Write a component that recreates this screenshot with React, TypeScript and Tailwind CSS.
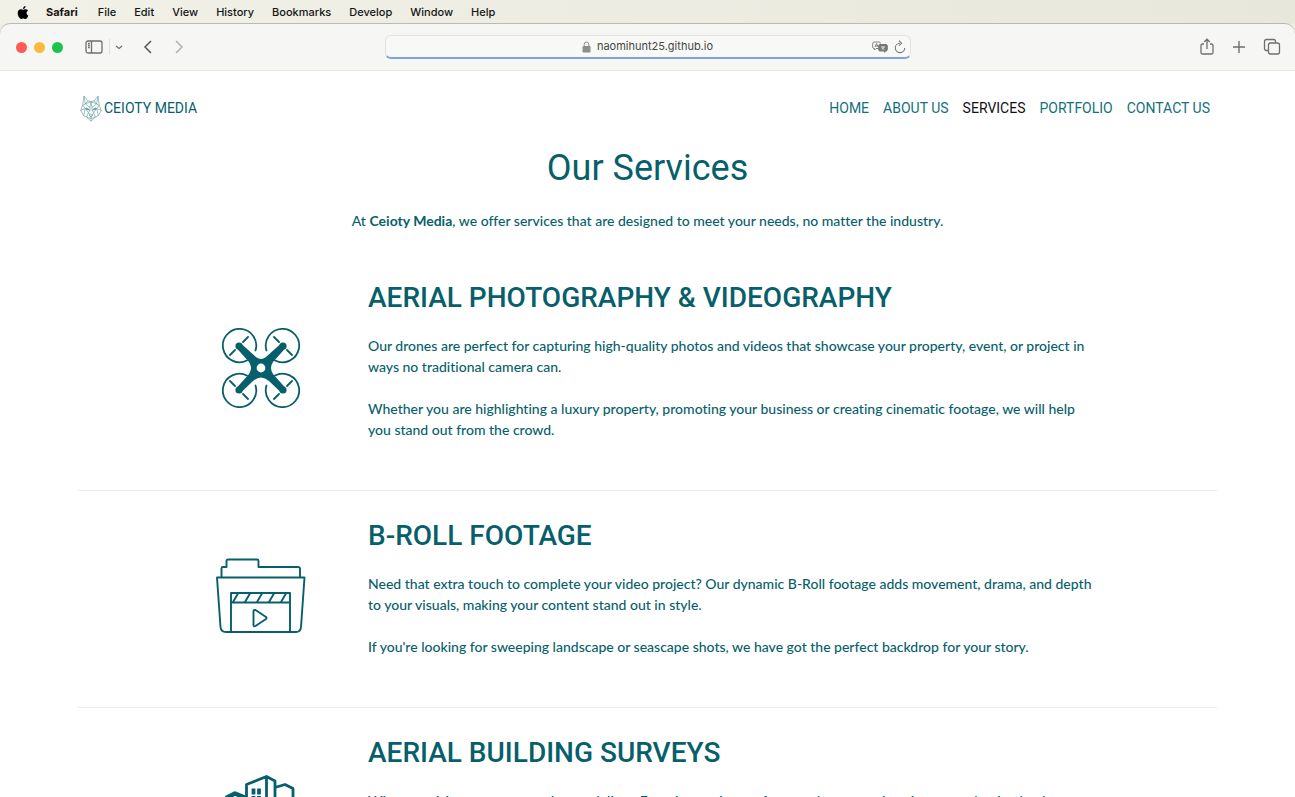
import React from "react";

const menuItems = ["File", "Edit", "View", "History", "Bookmarks", "Develop", "Window", "Help"];
const navItems = ["HOME", "ABOUT US", "SERVICES", "PORTFOLIO", "CONTACT US"];

function AppleIcon() {
  return (
    <svg viewBox="0 0 24 24" className="h-[13px] w-[14px]" fill="#000" aria-hidden="true">
      <path d="M12.15 6.9c-.95 0-2.41-1.08-3.96-1.04-2.04.03-3.91 1.18-4.96 3.01-2.12 3.68-.55 9.1 1.52 12.1 1.01 1.45 2.21 3.09 3.79 3.04 1.52-.07 2.09-.99 3.94-.99 1.83 0 2.35.99 3.96.95 1.64-.03 2.68-1.48 3.68-2.95 1.16-1.69 1.64-3.33 1.66-3.41-.04-.01-3.18-1.22-3.22-4.86-.03-3.04 2.48-4.49 2.6-4.56-1.43-2.09-3.62-2.32-4.39-2.38-2-.16-3.68 1.09-4.61 1.09zM15.53 3.83c.84-1.01 1.4-2.43 1.25-3.83-1.21.05-2.66.8-3.53 1.82-.78.9-1.45 2.34-1.27 3.71 1.34.1 2.71-.69 3.56-1.7" />
    </svg>
  );
}

function WolfIcon() {
  return (
    <svg viewBox="0 0 66 80" className="h-[27px] w-[22px]" fill="none" stroke="#5b979d" strokeWidth="1.8" strokeLinejoin="round" aria-hidden="true">
      <path d="M12 3 24 17 33 20 42 17 54 3 58 31 64 46 55 61 46 66 33 78 20 66 11 61 2 46 8 31Z" />
      <path d="M12 3 16 26 24 17M54 3 50 26 42 17M8 31 16 26 30 37 33 20 36 37 50 26 58 31M2 46 16 40 8 31M64 46 50 40 58 31M11 61 16 40 30 46M55 61 50 40 36 46M20 66 25 52 16 40M46 66 41 52 50 40M25 52 30 46 30 37M41 52 36 46 36 37M25 52 33 66 41 52M28 60 33 56 38 60 33 66ZM33 66V78M20 66 33 70 46 66M16 26 33 20 50 26" />
      <path d="M18 38 28 43 20 43ZM48 38 38 43 46 43Z" fill="#3d8289" />
    </svg>
  );
}

function DroneIcon() {
  return (
    <svg viewBox="0 0 80 80" className="h-20 w-20" fill="none" stroke="#075f6b" aria-hidden="true">
      <g strokeWidth="1.8" strokeLinecap="round">
        <path d="M26 32.500A16.700 16.700 0 1 1 34.500 22.500" />
        <path d="M54 32.500A16.700 16.700 0 1 0 45.500 22.500" />
        <path d="M26 47.500A16.700 16.700 0 1 0 34.500 57.500" />
        <path d="M54 47.500A16.700 16.700 0 1 1 45.500 57.500" />
        <path d="M22 14 27 9M14 22 9 27M58 14 53 9M66 22 71 27M14 58 9 53M22 66 27 71M66 58 71 53M58 66 53 71" />
      </g>
      <g fill="#075f6b" stroke="none">
        <circle cx="18" cy="18" r="3.600" /><circle cx="62" cy="18" r="3.600" />
        <circle cx="18" cy="62" r="3.600" /><circle cx="62" cy="62" r="3.600" />
        <path d="M20 15.500 35 29Q40 33 45 29L60 15.500 64.500 20 52 34Q48 40 52 46L64.500 60 60 64.500 48 53Q40 46 32 53L20 64.500 15.500 60 28 46Q32 40 28 34L15.500 20Z" />
      </g>
      <circle cx="40" cy="40" r="4.400" fill="#fff" stroke="none" />
    </svg>
  );
}

function FolderIcon() {
  return (
    <svg viewBox="0 0 90 76" className="h-[76px] w-[90px]" fill="none" stroke="#075f6b" strokeWidth="1.9" strokeLinejoin="round" aria-hidden="true">
      <path d="M5.500 19V10.500Q5.500 9 7 9H10.500V3Q10.500 1.500 12 1.500H41Q42.500 1.500 42.500 3V9H82Q84 9 84 11V19" />
      <path d="M1 19.500H88.500L85 69Q84.500 74 80 74H10Q5 74 4.500 69Z" />
      <path d="M15 74V35H74V74M15 44.500H74M17 44 22 35.500M29 44 34 35.500M41 44 46 35.500M53 44 58 35.500M65 44 70 35.500" />
      <path d="M37.500 53.500V67Q37.500 69 39.500 68L50 61Q51 60 50 59L39.500 52Q37.500 51.500 37.500 53.500Z" />
    </svg>
  );
}

function BuildingIcon() {
  return (
    <svg viewBox="0 2 76 76" className="h-[76px] w-[76px]" fill="none" stroke="#075f6b" strokeWidth="2.8" strokeLinejoin="round" aria-hidden="true">
      <path d="M23.500 74V11.500L43.500 3.500V74M43.500 3.500 52 8V74M52 14.500 62 11.500 70 15.500V74M5 74V26M5 74H72" />
      <path d="M3 25 12 20.500 23 25" strokeWidth="4.5" />
      <path d="M30.500 15.500V21.500M36 15.500V21.500M30.500 23V30M36 23V30M30.500 36V44M36 36V44" strokeWidth="3.8" />
    </svg>
  );
}

function Chrome() {
  return (
    <header className="grid h-[47px] shrink-0 grid-cols-[1fr_526px_1fr] items-center rounded-t-[10px] border-b border-[#e6e7e5] bg-[#f6f7f5] px-4 text-[#6f706e] shadow-[0_-1px_0_#b9bab2]">
      <div className="flex items-center">
        <div className="flex gap-[7px]">
          <button aria-label="Close" className="h-[11px] w-[11px] rounded-full bg-[#fc5b57]" />
          <button aria-label="Minimise" className="h-[11px] w-[11px] rounded-full bg-[#fdb93f]" />
          <button aria-label="Zoom" className="h-[11px] w-[11px] rounded-full bg-[#1fc24b]" />
        </div>
        <button aria-label="Sidebar" className="ml-[22px]">
          <svg viewBox="0 0 18 14" className="h-[14px] w-[18px]" fill="none" stroke="currentColor" strokeWidth="1.3"><rect x="1" y="1" width="16" height="12" rx="2" /><path d="M6.500 1V13M3 3.500H4.800M3 5.500H4.800M3 7.500H4.800" /></svg>
        </button>
        <div className="ml-1.5 h-4 w-px bg-[#e0e1df]" />
        <button aria-label="Tab groups" className="ml-[5px]">
          <svg viewBox="0 0 8 8" className="h-2 w-2" fill="none" stroke="currentColor" strokeWidth="1.3"><path d="M1 3 4 5.500 7 3" /></svg>
        </button>
        <button aria-label="Back" className="ml-5">
          <svg viewBox="0 0 10 14" className="h-[14px] w-[10px]" fill="none" stroke="#555" strokeWidth="1.5"><path d="M8 1 2 7 8 13" /></svg>
        </button>
        <button aria-label="Forward" className="ml-[21px]">
          <svg viewBox="0 0 10 14" className="h-[14px] w-[10px]" fill="none" stroke="#b1b2b0" strokeWidth="1.5"><path d="M2 1 8 7 2 13" /></svg>
        </button>
      </div>
      <div className="flex h-6 items-center rounded-md border border-b-2 border-[#e2e3e1] border-b-[#82a3d8] bg-[#f8f9f7] px-1">
        <div className="w-8" />
        <button className="flex flex-1 items-center justify-center gap-1.5 text-[11px] text-[#454644]">
          <svg viewBox="0 0 9 12" className="h-3 w-[9px]" fill="#8e8f8d"><rect x="0.500" y="5" width="8" height="6.500" rx="1" /><path d="M2.200 5V3.300a2.300 2.300 0 0 1 4.600 0V5" fill="none" stroke="#8e8f8d" /></svg>
          naomihunt25.github.io
        </button>
        <div className="flex w-8 items-center justify-end gap-1.5">
          <button aria-label="Translate">
            <svg viewBox="0 0 16 12" className="h-3 w-4" fill="none" stroke="#777876"><path d="M7 7.500H4L2.500 9V7.500H2Q.700 7.500.700 6V2.500Q.700 1 2 1H7Q8.500 1 8.500 2.500M3 6 4.600 2.500 6 6M3.500 5H5.500" strokeWidth=".9" /><path d="M8 3.500H14Q15.300 3.500 15.300 5V8.500Q15.300 10 14 10H13V11.300L11.500 10H8Q6.700 10 6.700 8.500V5Q6.700 3.500 8 3.500Z" fill="#777876" /><path d="M9 6H13M11 5V6M9.500 8.700 12.500 6M9.700 6.500 12.500 8.700" stroke="#f8f9f7" strokeWidth=".7" /></svg>
          </button>
          <button aria-label="Reload">
            <svg viewBox="0 0 12 14" className="h-[14px] w-3" fill="none" stroke="#777876" strokeWidth="1.1"><path d="M6 3.200A4.700 4.700 0 1 0 10.700 8M5 .7 7.600 3.300 5 5.700" /></svg>
          </button>
        </div>
      </div>
      <div className="-mr-0.5 flex items-center justify-end gap-4">
        <button aria-label="Share"><svg viewBox="0 0 16 18" className="h-[18px] w-4" fill="none" stroke="currentColor" strokeWidth="1.3"><path d="M5 6H3.500Q2 6 2 7.500V14.500Q2 16 3.500 16H12.500Q14 16 14 14.500V7.500Q14 6 12.500 6H11M8 11V1.300M5.200 4 8 1.200 10.800 4" /></svg></button>
        <button aria-label="New tab"><svg viewBox="0 0 16 16" className="h-4 w-4" fill="none" stroke="currentColor" strokeWidth="1.4"><path d="M8 2V14M2 8H14" /></svg></button>
        <button aria-label="Tab overview"><svg viewBox="0 0 18 18" className="h-[18px] w-[18px]" fill="none" stroke="currentColor" strokeWidth="1.3"><rect x="5.500" y="5" width="11" height="11" rx="2" /><path d="M5.500 12.500H3.500Q1.500 12.500 1.500 10.500V3.500Q1.500 1.500 3.500 1.500H10.500Q12.500 1.500 12.500 3.500V5" /></svg></button>
      </div>
    </header>
  );
}

type ServiceProps = { title: string; icon: React.ReactNode; paragraphs: string[] };

function Service({ title, icon, paragraphs }: ServiceProps) {
  return (
    <section className="flex items-center border-b border-[#e9ecec] pt-[27px] pb-[50px]">
      <div className="flex w-[290px] shrink-0 justify-center pt-4 pl-[76px]">{icon}</div>
      <div className="min-h-[139px] max-w-[728px] flex-1">
        <h2 className="text-[28px] leading-9 font-medium">{title}</h2>
        <div className="mt-[19px] flex flex-col gap-[21px] font-[Lato,sans-serif] text-sm leading-[21px] font-medium [font-variant-ligatures:none]">
          {paragraphs.map((p) => <p key={p}>{p}</p>)}
        </div>
      </div>
    </section>
  );
}

export default function App() {
  return (
    <div className="flex h-screen flex-col overflow-hidden bg-[#efefe4] font-['Inter',sans-serif]">
      <div className="flex h-6 shrink-0 items-center bg-linear-to-r from-[#f1f1e7] to-[#e7e7dc] pl-4 text-[11px] font-medium text-[#151515]">
        <button aria-label="Apple menu"><AppleIcon /></button>
        <button className="ml-4 font-bold">Safari</button>
        <nav className="ml-5 flex gap-[18px]">
          {menuItems.map((item) => <button key={item}>{item}</button>)}
        </nav>
      </div>
      <Chrome />
      <main className="min-h-0 flex-1 overflow-hidden bg-white px-[78px] pt-[23px] font-['Roboto',sans-serif] text-[#075f6b]">
        <div className="flex h-7 items-center justify-between pr-[7px] pl-0.5 text-sm">
          <a href="#home" className="flex items-center gap-0.5"><WolfIcon />CEIOTY MEDIA</a>
          <nav className="flex gap-[14px]">
            {navItems.map((item) => <a key={item} href={"#" + item.toLowerCase().replace(" ", "-")} className={item === "SERVICES" ? "text-[#111]" : "text-[#13707b]"}>{item}</a>)}
          </nav>
        </div>
        <h1 className="mt-[22px] text-center text-[36px] leading-[48px]">Our Services</h1>
        <p className="mt-[18px] text-center font-[Lato,sans-serif] text-sm leading-[21px] font-medium [font-variant-ligatures:none]">At <strong>Ceioty Media</strong>, we offer services that are designed to meet your needs, no matter the industry.</p>
        <div className="mt-[22px]">
          <Service title="AERIAL PHOTOGRAPHY & VIDEOGRAPHY" icon={<DroneIcon />} paragraphs={["Our drones are perfect for capturing high-quality photos and videos that showcase your property, event, or project in ways no traditional camera can.", "Whether you are highlighting a luxury property, promoting your business or creating cinematic footage, we will help you stand out from the crowd."]} />
          <Service title="B-ROLL FOOTAGE" icon={<FolderIcon />} paragraphs={["Need that extra touch to complete your video project? Our dynamic B-Roll footage adds movement, drama, and depth to your visuals, making your content stand out in style.", "If you're looking for sweeping landscape or seascape shots, we have got the perfect backdrop for your story."]} />
          <Service title="AERIAL BUILDING SURVEYS" icon={<BuildingIcon />} paragraphs={["When precision matters, our drones deliver. From inspecting rooftops and construction sites to evaluating land"]} />
        </div>
      </main>
    </div>
  );
}
